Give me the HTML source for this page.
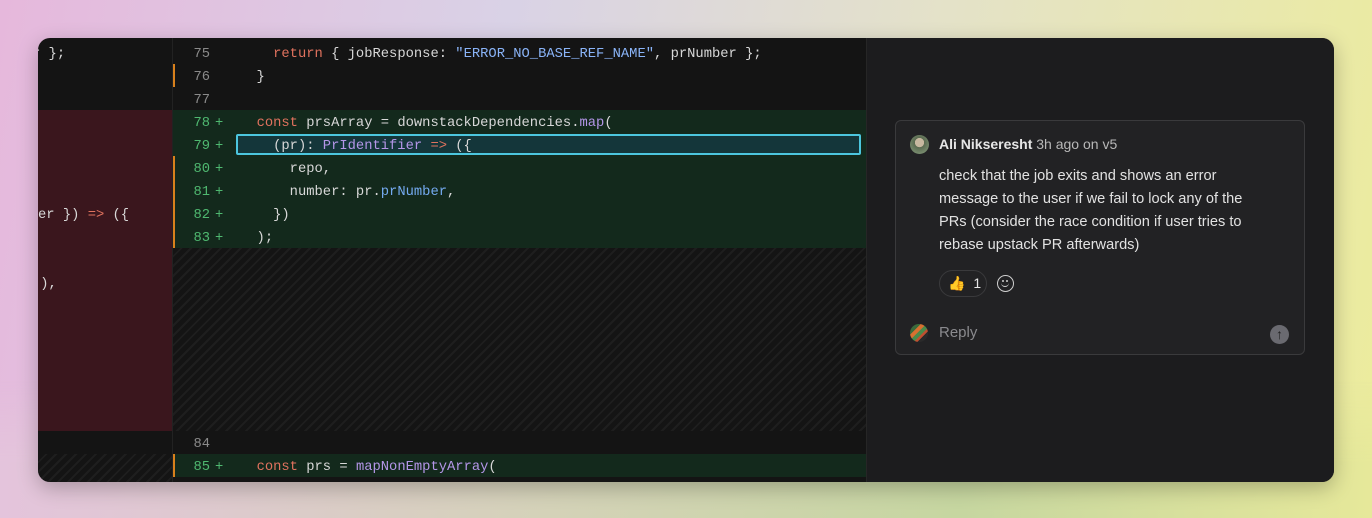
<!DOCTYPE html>
<html><head><style>
*{margin:0;padding:0;box-sizing:border-box}
body{width:1372px;height:518px;overflow:hidden;position:relative;font-family:"Liberation Sans",sans-serif;
background:linear-gradient(100deg,#e6b8dc 0%,#d9d2e6 35%,#e4e2c8 65%,#ecec9c 100%);}
.bgb{position:absolute;left:0;top:380px;width:1372px;height:138px;background:linear-gradient(90deg,#e4c4dc,#d4d2b8 40%,#c6d6a0 70%,#e6e89a);-webkit-mask-image:linear-gradient(180deg,transparent,#000 60%);mask-image:linear-gradient(180deg,transparent,#000 60%)}
.win{position:absolute;left:38px;top:38px;width:1296px;height:444px;border-radius:12px;overflow:hidden;background:#141414;box-shadow:0 6px 20px rgba(0,0,0,.25)}
.hatch{background:repeating-linear-gradient(135deg,#141414 0 5px,#1e1e1e 5px 7px)}
.abs{position:absolute}
.code{font-family:"Liberation Mono",monospace;font-size:13.8px;color:#d8d8d8;white-space:pre;line-height:23px}
.row{position:absolute;left:135px;width:693px;height:23px}
.ln{position:absolute;left:0;top:2px;width:37px;text-align:right;color:#8a8a8a}
.g .ln,.pl{color:#4fb870}
.pl{position:absolute;left:42px;top:2px}
.t{position:absolute;left:67px;top:2px}
.g{background:#13291c}
.bar{position:absolute;left:0;top:0;width:2px;height:23px;background:#d8801c}
.k{color:#e0725e}.p{color:#b496e8}.b{color:#74aaf0}.s{color:#8ab4f8}
</style></head><body>
<div class="bgb"></div>
<div class="win">
  <div class="abs" style="left:0;top:72px;width:134px;height:321px;background:#3a161d"></div>
  <div class="abs hatch" style="left:0;top:416px;width:134px;height:28px"></div>
  <div class="abs code" style="left:-6px;top:5px;">r };</div>
  <div class="abs code" style="left:0;top:166px;">er }) <span class="k">=&gt;</span> ({</div>
  <div class="abs code" style="left:-6px;top:235px;"> ),</div>
  <div class="abs" style="left:134px;top:0;width:1px;height:444px;background:#222"></div>
  <div class="abs hatch" style="left:135px;top:210px;width:693px;height:183px"></div>
  <div class="code">
    <div class="row" style="top:3px"><span class="ln">75</span><span class="t">    <span class="k">return</span> { jobResponse: <span class="s">"ERROR_NO_BASE_REF_NAME"</span>, prNumber };</span></div>
    <div class="row" style="top:26px"><div class="bar"></div><span class="ln">76</span><span class="t">  }</span></div>
    <div class="row" style="top:49px"><span class="ln">77</span></div>
    <div class="row g" style="top:72px"><span class="ln">78</span><span class="pl">+</span><span class="t">  <span class="k">const</span> prsArray = downstackDependencies.<span class="p">map</span>(</span></div>
    <div class="row g" style="top:95px"><span class="ln">79</span><span class="pl">+</span><div class="abs" style="left:63px;top:1px;width:625px;height:21px;border:2px solid #4cc6de;border-radius:2px;background:#14363a"></div><span class="t">    (pr): <span class="p">PrIdentifier</span> <span class="k">=&gt;</span> ({</span></div>
    <div class="row g" style="top:118px"><div class="bar"></div><span class="ln">80</span><span class="pl">+</span><span class="t">      repo,</span></div>
    <div class="row g" style="top:141px"><div class="bar"></div><span class="ln">81</span><span class="pl">+</span><span class="t">      number: pr.<span class="b">prNumber</span>,</span></div>
    <div class="row g" style="top:164px"><div class="bar"></div><span class="ln">82</span><span class="pl">+</span><span class="t">    })</span></div>
    <div class="row g" style="top:187px"><div class="bar"></div><span class="ln">83</span><span class="pl">+</span><span class="t">  );</span></div>
    <div class="row" style="top:393px"><span class="ln">84</span></div>
    <div class="row g" style="top:416px"><div class="bar"></div><span class="ln">85</span><span class="pl">+</span><span class="t">  <span class="k">const</span> prs = <span class="p">mapNonEmptyArray</span>(</span></div>
  </div>
  <div class="abs" style="left:828px;top:0;width:468px;height:444px;background:#1c1c1e;border-left:1px solid #262626"></div>
  <div class="abs" style="left:857px;top:82px;width:410px;height:235px;background:#222224;border:1px solid #3a3a3c;border-radius:6px;color:#e6e6e6">
    <div class="abs" style="left:14px;top:14px;width:19px;height:19px;border-radius:50%;background:radial-gradient(circle at 50% 40%,#c8b8a0 0 30%,#5a6a50 32%,#8aa080)"></div>
    <div class="abs" style="left:43px;top:15px;font-size:14px;"><b style="font-weight:600">Ali Nikseresht</b> <span style="color:#b8b8b8">3h ago on v5</span></div>
    <div class="abs" style="left:43px;top:44px;width:332px;font-size:14.6px;line-height:23px;color:#e2e2e2">check that the job exits and shows an error message to the user if we fail to lock any of the PRs (consider the race condition if user tries to rebase upstack PR afterwards)</div>
    <div class="abs" style="left:43px;top:149px;width:48px;height:27px;border:1px solid #3a3a3c;border-radius:14px;font-size:14px;line-height:25px;padding-left:8px">👍 <span style="margin-left:4px">1</span></div>
    <div class="abs" style="left:101px;top:154px;width:17px;height:17px;border:1.6px solid #cfcfcf;border-radius:50%">
      <div class="abs" style="left:3.5px;top:4px;width:2px;height:2px;background:#cfcfcf;border-radius:50%"></div>
      <div class="abs" style="left:8px;top:4px;width:2px;height:2px;background:#cfcfcf;border-radius:50%"></div>
      <div class="abs" style="left:3px;top:6px;width:7.5px;height:5px;border-bottom:1.5px solid #cfcfcf;border-radius:0 0 5px 5px"></div>
    </div>
    <div class="abs" style="left:14px;top:203px;width:18px;height:18px;border-radius:50%;background:linear-gradient(135deg,#3a6a3a 0 30%,#d87030 30% 45%,#4a8a4a 45% 60%,#c05030 60% 70%,#2a2a2a 70%)"></div>
    <div class="abs" style="left:43px;top:203px;font-size:15px;color:#8a8a8e">Reply</div>
    <div class="abs" style="left:374px;top:204px;width:19px;height:19px;border-radius:50%;background:#6a6a70;color:#222;font-size:14px;line-height:19px;text-align:center;font-weight:bold">↑</div>
  </div>
</div>
</body></html>
